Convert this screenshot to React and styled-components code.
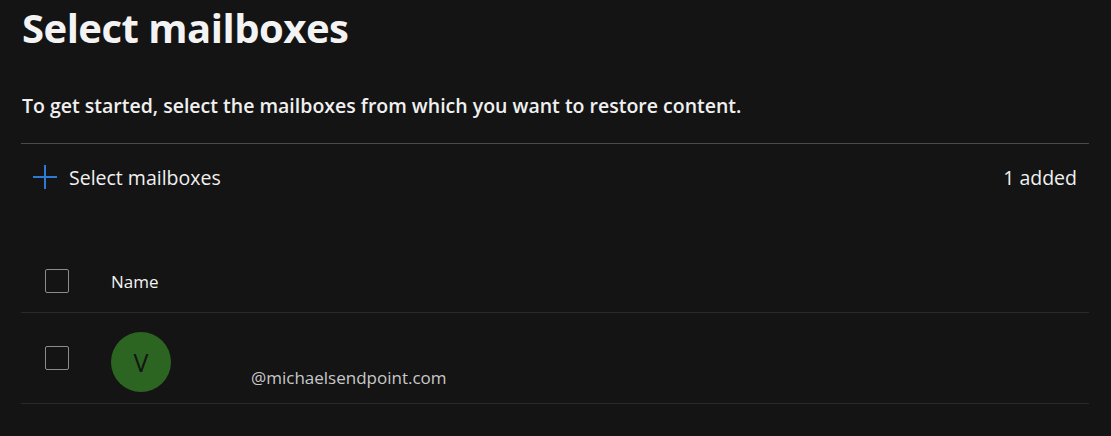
import styled, { createGlobalStyle } from 'styled-components';

const GlobalStyle = createGlobalStyle`
  html, body {
    margin: 0;
    padding: 0;
    background: #141414;
  }
  body {
    font-family: "Open Sans", "Noto Sans", sans-serif;
    color: #f2f2f2;
  }
`;

const Page = styled.main`
  width: 1111px;
  height: 436px;
  box-sizing: border-box;
  padding: 0 22px 0 21px;
  background: #141414;
  overflow: hidden;
`;

const Title = styled.h1`
  margin: 0;
  padding: 4px 0 0 1px;
  font-size: 40px;
  font-weight: 700;
  line-height: 48px;
  letter-spacing: -0.5px;
  color: #f3f3f3;
`;

const Intro = styled.p`
  margin: 41px 0 0 1px;
  font-size: 19.5px;
  font-weight: 600;
  line-height: 26px;
  color: #f0f0f0;
`;

const Divider = styled.hr`
  margin: ${({ $gap }) => $gap || 0}px 0 0;
  border: 0;
  border-top: 1px solid ${({ $strong }) => ($strong ? '#4a4a4a' : '#2a2a2a')};
`;

const Toolbar = styled.div`
  display: flex;
  align-items: center;
  justify-content: space-between;
  height: 66px;
  padding-bottom: 2px;
`;

const AddButton = styled.button`
  display: flex;
  align-items: center;
  gap: 12px;
  padding: 0 0 0 12px;
  background: none;
  border: 0;
  font-family: inherit;
  font-size: 19.5px;
  color: #f0f0f0;
  cursor: pointer;
`;

const Count = styled.span`
  font-size: 19.5px;
  color: #f0f0f0;
  padding-right: 12px;
`;

const Table = styled.div`
  margin-top: 38px;
`;

const Row = styled.div`
  display: grid;
  grid-template-columns: 90px 1fr;
  align-items: center;
  height: ${({ $tall }) => ($tall ? '90px' : '62px')};
`;

const Check = styled.span`
  display: block;
  width: 22px;
  height: 22px;
  margin-left: 24px;
  border: 1px solid #8c8c8c;
  border-radius: 2px;
`;

const HeadLabel = styled.span`
  font-size: 17px;
  color: #f2f2f2;
`;

const Person = styled.div`
  display: flex;
  align-items: flex-start;
  gap: 80px;
  margin-top: 8px;
`;

const Avatar = styled.div`
  width: 60px;
  height: 60px;
  border-radius: 50%;
  background: #2b6521;
  color: #141414;
  display: flex;
  align-items: center;
  justify-content: center;
  font-size: 25px;
  font-weight: 400;
`;

const Email = styled.span`
  margin-top: 34px;
  font-size: 17px;
  line-height: 24px;
  color: #c8c8c8;
`;

const PlusIcon = () => (
  <svg width="24" height="24" viewBox="0 0 24 24">
    <path d="M12 0v24M0 12h24" stroke="#2b7bd6" strokeWidth="2" fill="none" />
  </svg>
);

export default function App() {
  return (
    <>
      <GlobalStyle />
      <Page>
        <Title>Select mailboxes</Title>
        <Intro>To get started, select the mailboxes from which you want to restore content.</Intro>
        <Divider $strong $gap={24} />
        <Toolbar>
          <AddButton>
            <PlusIcon />
            Select mailboxes
          </AddButton>
          <Count>1 added</Count>
        </Toolbar>
        <Table>
          <Row>
            <Check />
            <HeadLabel>Name</HeadLabel>
          </Row>
          <Divider />
          <Row $tall>
            <Check />
            <Person>
              <Avatar>V</Avatar>
              <Email>@michaelsendpoint.com</Email>
            </Person>
          </Row>
          <Divider />
        </Table>
      </Page>
    </>
  );
}
